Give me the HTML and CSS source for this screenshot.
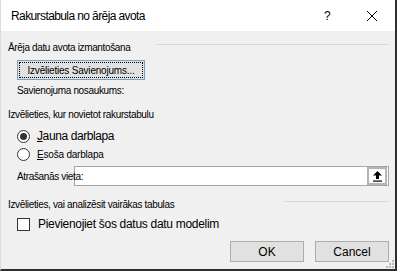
FILE: index.html
```html
<!DOCTYPE html>
<html lang="lv">
<head>
    <meta charset="UTF-8">
    <title>Rakurstabula no ārēja avota</title>
    <link rel="stylesheet" href="styles.css">
</head>
<body>

    <div class="window">
        <!-- Virsraksta josla -->
        <div class="titlebar">
            <span class="title">Rakurstabula no ārēja avota</span>
            <span class="help">?</span>
            <span class="close">
                <svg width="12" height="12" viewBox="0 0 12 12"><path d="M1 1 L11 11 M11 1 L1 11" stroke="#000" stroke-width="1"/></svg>
            </span>
        </div>

        <div class="content">
            <div class="section-head">
                <span>Ārēja datu avota izmantošana</span>
                <span class="rule rule-first"></span>
            </div>

            <div class="indent">
                <button class="btn btn-connect"><span>Izvēlieties Savienojums...</span></button>
                <div class="label conn-name">Savienojuma nosaukums:</div>
            </div>

            <div class="section-head head-place">
                <span>Izvēlieties, kur novietot rakurstabulu</span>
            </div>

            <div class="indent">
                <div class="radio-row big">
                    <span class="radio checked"></span>
                    <span><u>J</u>auna darblapa</span>
                </div>
                <div class="radio-row second">
                    <span class="radio"></span>
                    <span><u>E</u>soša darblapa</span>
                </div>
                <div class="location">
                    <span class="label">Atrašanās vieta:</span>
                    <div class="input">
                        <span class="pick">
                            <svg width="11" height="12" viewBox="0 0 11 12"><path d="M5.5 1 L1 5.5 H4 V9 H7 V5.5 H10 Z" fill="#000"/><rect x="1" y="10.5" width="9" height="1.2" fill="#000"/></svg>
                        </span>
                    </div>
                </div>
            </div>

            <div class="section-head head-tables">
                <span>Izvēlieties, vai analizēsit vairākas tabulas</span>
                <span class="rule rule-third"></span>
            </div>

            <div class="indent">
                <div class="check-row">
                    <span class="checkbox"></span>
                    <span>Pievienojiet šos datus datu modelim</span>
                </div>
            </div>

            <div class="footer">
                <button class="btn btn-footer">OK</button>
                <button class="btn btn-footer">Cancel</button>
            </div>
        </div>

        <svg class="grip" width="10" height="10" viewBox="0 0 10 10">
            <rect x="7" y="1" width="2" height="2" fill="#b8b8b8"/>
            <rect x="4" y="4" width="2" height="2" fill="#b8b8b8"/>
            <rect x="7" y="4" width="2" height="2" fill="#b8b8b8"/>
            <rect x="1" y="7" width="2" height="2" fill="#b8b8b8"/>
            <rect x="4" y="7" width="2" height="2" fill="#b8b8b8"/>
            <rect x="7" y="7" width="2" height="2" fill="#b8b8b8"/>
        </svg>
    </div>

</body>
</html>
```

FILE: styles.css
```css
* {
    margin: 0;
    padding: 0;
    box-sizing: border-box;
    font-family: 'Liberation Sans', Arial, sans-serif;
}

body {
    width: 397px;
    height: 271px;
    overflow: hidden;
    background-color: #f0f0f0;
    color: #000;
}

.window {
    position: relative;
    width: 397px;
    height: 271px;
    background-color: #f0f0f0;
    border-left: 1px solid #dcdcdc;
    border-right: 2px solid #2e2e2e;
    border-bottom: 2px solid #2e2e2e;
}

/* Virsraksta josla */
.titlebar {
    height: 31px;
    background-color: #ffffff;
    display: flex;
    align-items: center;
    padding-left: 10px;
    font-size: 12px;
    letter-spacing: -0.6px;
}

.title {
    flex: 1;
}

.help {
    width: 20px;
    text-align: center;
    margin-right: 29px;
}

.close {
    width: 12px;
    height: 12px;
    margin-right: 17px;
    display: flex;
}

.content {
    padding: 9px 6px 0 7px;
    font-size: 10px;
    letter-spacing: -0.35px;
}

.section-head {
    height: 14px;
    display: flex;
    align-items: center;
}

.rule {
    border-top: 1px solid #d9d9d9;
    margin-top: -6px;
    margin-left: auto;
}

.rule-first {
    width: 233px;
}

.rule-third {
    width: 105px;
}

.indent {
    padding-left: 9px;
}

.btn {
    background-color: #e1e1e1;
    border: 1px solid #adadad;
    font-size: 11px;
    color: #000;
}

.btn-connect {
    display: flex;
    width: 128px;
    height: 20px;
    margin-top: 6px;
    padding: 1px;
    border-color: #7a9ec2;
}

.btn-connect span {
    flex: 1;
    display: flex;
    align-items: center;
    justify-content: center;
    border: 1px dotted #000;
    font-size: 10px;
    letter-spacing: -0.2px;
}

.conn-name {
    height: 14px;
    line-height: 14px;
    margin-top: 4px;
}

.head-place {
    margin-top: 9px;
}

.radio-row {
    display: flex;
    align-items: center;
    height: 16px;
    gap: 7px;
}

.radio-row.big {
    margin-top: 7px;
    font-size: 12px;
    letter-spacing: -0.4px;
}

.radio-row.second {
    margin-top: 2px;
    font-size: 10px;
    letter-spacing: -0.2px;
}

.radio {
    width: 13px;
    height: 13px;
    border: 1px solid #333;
    border-radius: 50%;
    background-color: #fff;
    display: flex;
    align-items: center;
    justify-content: center;
}

.radio.checked::after {
    content: "";
    width: 7px;
    height: 7px;
    border-radius: 50%;
    background-color: #333;
}

.location {
    display: flex;
    align-items: center;
    margin-top: 4px;
    height: 20px;
}

.location .label {
    position: relative;
    z-index: 1;
    width: 57px;
    white-space: nowrap;
}

.input {
    flex: 1;
    height: 20px;
    background-color: #fff;
    border: 1px solid #a6a6a6;
    display: flex;
    justify-content: flex-end;
    align-items: center;
}

.pick {
    width: 20px;
    height: 18px;
    border: 2px solid #b4b4b4;
    display: flex;
    align-items: center;
    justify-content: center;
    margin-right: 1px;
}

.head-tables {
    margin-top: 11px;
}

.check-row {
    display: flex;
    align-items: center;
    gap: 8px;
    margin-top: 6px;
    height: 14px;
    font-size: 12px;
    letter-spacing: -0.3px;
}

.checkbox {
    width: 13px;
    height: 13px;
    border: 1px solid #333;
    background-color: #fff;
}

.footer {
    display: flex;
    justify-content: flex-end;
    gap: 11px;
    margin-top: 10px;
}

.btn-footer {
    width: 74px;
    height: 21px;
    font-size: 12px;
}

.grip {
    position: absolute;
    right: 0;
    bottom: 0;
}
```
